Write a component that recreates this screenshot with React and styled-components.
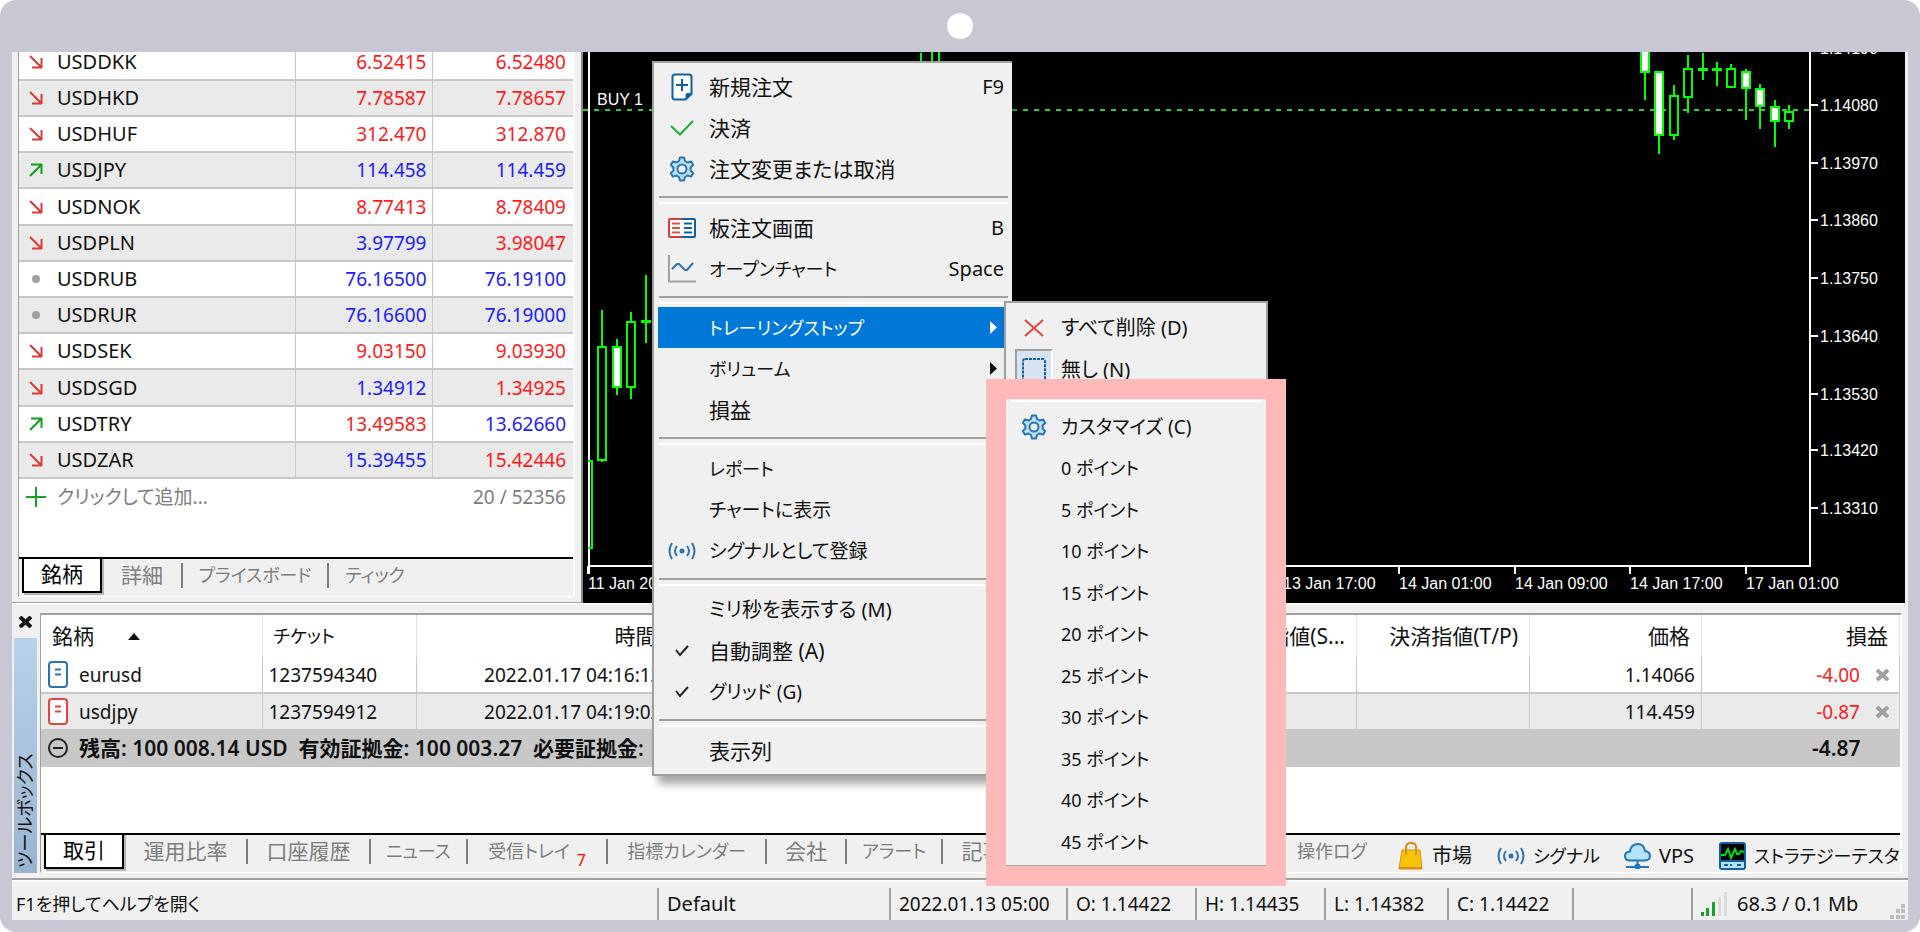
import React from 'react';
import styled, { createGlobalStyle, css } from 'styled-components';

const color = {
  frame: '#c8c7d4',
  panel: '#f0f0f0',
  line: '#a0a0a0',
  grid: '#c8c8c8',
  stripe: '#eaeaea',
  muted: '#7d7d7d',
  red: '#ff1a1a',
  blue: '#2020ff',
  candle: '#00ff00',
  highlight: '#0078d7',
  pink: '#ffb9b9',
};

const GlobalStyle = createGlobalStyle`
  * {
    box-sizing: border-box;
  }
  body {
    margin: 0;
    background: #fff;
    color: #111;
    font-family: 'Noto Sans', 'Noto Sans CJK JP', sans-serif;
    font-size: 20px;
    line-height: 24px;
    font-feature-settings: 'palt';
  }
  button {
    margin: 0;
    padding: 0;
    border: 0;
    background: none;
    color: inherit;
    font: inherit;
    font-feature-settings: inherit;
    white-space: nowrap;
    cursor: pointer;
  }
  ul {
    list-style: none;
    margin: 0;
    padding: 0;
  }
  svg {
    display: block;
    flex: none;
  }
`;

const Device = styled.div`
  position: relative;
  display: flex;
  flex-direction: column;
  min-height: 100vh;
  padding: 0 12px 12px;
  border-radius: 16px;
  background: ${color.frame};
  overflow: hidden;
`;

const Camera = styled.div`
  height: 52px;
  display: flex;
  align-items: center;
  justify-content: center;
  &::after {
    content: '';
    width: 26px;
    height: 26px;
    border-radius: 50%;
    background: #fff;
  }
`;

const Screen = styled.main`
  flex: 1;
  display: flex;
  flex-direction: column;
  min-width: 0;
  background: ${color.panel};
`;

const Upper = styled.section`
  display: flex;
  height: 552px;
  border-bottom: 1px solid #fff;
`;

/* ---------- market watch ---------- */

const MarketPanel = styled.div`
  width: 571px;
  flex: none;
  display: flex;
  flex-direction: column;
  padding: 0 6px 5px;
  border-right: 2px solid #8c8c8c;
  border-bottom: 1px solid ${color.line};
`;

const MarketBody = styled.div`
  flex: 1;
  display: flex;
  flex-direction: column;
  overflow: hidden;
  border-left: 1px solid ${color.line};
  border-right: 2px solid #fafafa;
  border-bottom: 1px solid #fff;
`;

const MarketList = styled.div`
  flex: 1;
  background: #fff;
  overflow: hidden;
`;

const MarketTable = styled.table`
  width: 100%;
  margin-top: -8px;
  border-collapse: collapse;
  table-layout: fixed;
  tr {
    height: 36px;
  }
  tr:nth-child(5n) {
    height: 37px;
  }
  tr:nth-child(even) {
    background: ${color.stripe};
  }
  td {
    padding: 0;
    border-bottom: 2px solid ${color.grid};
  }
  td + td {
    border-left: 1px solid ${color.grid};
  }
`;

const SymbolCell = styled.div`
  display: flex;
  align-items: center;
  gap: 11px;
  padding-left: 7px;
  svg {
    width: 20px;
  }
`;

const Price = styled.div`
  padding-right: ${(props) => (props.$last ? 7 : 5)}px;
  font-size: 19px;
  text-align: right;
  color: ${(props) => (props.$up ? color.blue : color.red)};
`;

const AddRow = styled.div`
  display: flex;
  align-items: center;
  justify-content: space-between;
  height: 36px;
  padding: 0 7px;
  font-size: 19px;
  color: ${color.muted};
  button {
    display: flex;
    align-items: center;
    gap: 11px;
  }
`;

/* ---------- tabs, both panels ---------- */

const TabBar = styled.div`
  display: flex;
  height: 39px;
  background: ${color.panel};
  border-top: 2px solid #000;
  overflow: hidden;
`;

const TabList = styled.nav`
  flex: none;
  display: flex;
  margin-right: 9px;
`;

const Tab = styled.button`
  position: relative;
  flex: none;
  width: ${(props) => props.$width}px;
  height: 32px;
  color: ${color.muted};
  font-size: ${(props) => (props.$kana ? 18 : 21)}px;
  &:not(:last-child)::after {
    content: '';
    position: absolute;
    right: -1px;
    top: 4px;
    width: 2px;
    height: 25px;
    background: ${color.muted};
  }
  ${(props) => props.$active && css`
    height: 36px;
    margin-top: -2px;
    margin-left: 3px;
    border: 2px solid #000;
    border-top: 0;
    background: #fff;
    color: #000;
    box-shadow: 2px 2px 0 #b4b4b4;
    &:not(:last-child)::after {
      display: none;
    }
  `}
  sub {
    margin-left: 7px;
    font-size: 16px;
    line-height: 0;
    vertical-align: -8px;
    color: #ff0000;
  }
`;

/* ---------- chart ---------- */

const ChartArea = styled.div`
  flex: 1;
  min-width: 0;
  height: 551px;
  margin-right: 3px;
  background: #000;
  overflow: hidden;
  svg {
    width: 100%;
    height: 551px;
  }
  text {
    fill: #fff;
    font-family: 'Liberation Sans', sans-serif;
    font-size: 16px;
  }
`;

/* ---------- toolbox ---------- */

const Toolbox = styled.section`
  flex: 1;
  display: flex;
  padding: 9px 6px 5px 0;
  border-bottom: 2px solid ${color.line};
`;

const Rail = styled.div`
  width: 28px;
  flex: none;
  display: flex;
  flex-direction: column;
  padding: 0 3px 0 2px;
  > button {
    height: 25px;
    display: flex;
    align-items: flex-start;
    justify-content: center;
    padding-top: 3px;
  }
`;

const RailTitle = styled.div`
  flex: 1;
  width: 23px;
  padding-top: 5px;
  writing-mode: vertical-rl;
  text-orientation: sideways;
  transform: rotate(180deg);
  font-size: 18px;
  line-height: 23px;
  background: linear-gradient(to top, #b9d1ea, #99b4d1);
`;

const ToolboxMain = styled.div`
  flex: 1;
  min-width: 0;
  display: flex;
  flex-direction: column;
  border-left: 1px solid ${color.line};
  border-top: 2px solid ${color.line};
  border-right: 2px solid #fff;
  border-bottom: 1px solid #fff;
`;

const TradeArea = styled.div`
  flex: 1;
  background: #fff;
`;

const TradeTable = styled.table`
  width: 100%;
  border-collapse: collapse;
  table-layout: fixed;
  font-size: 19px;
  th,
  td {
    padding: 0 6px;
    border-right: 1px solid ${color.grid};
    text-align: left;
    white-space: nowrap;
    overflow: hidden;
  }
  th {
    height: 42px;
    padding: 0 11px;
    border-color: #e5e5e5;
    font-weight: 400;
    font-size: 21px;
  }
  tbody tr {
    height: 36px;
  }
  tbody tr:first-child td {
    border-bottom: 2px solid ${color.grid};
  }
  tbody tr:nth-child(2) {
    background: ${color.stripe};
  }
  .num {
    text-align: right;
  }
  .kana {
    font-size: 18px;
  }
  tfoot tr {
    height: 38px;
    background: ${color.grid};
    font-weight: 600;
  }
  tfoot td {
    border: 0;
    font-size: 21px;
    white-space: pre;
    overflow: visible;
  }
  tfoot .num {
    padding-right: 39px;
  }
`;

const CellLine = styled.div`
  display: flex;
  align-items: center;
  justify-content: ${(props) => (props.$end ? 'flex-end' : 'flex-start')};
  gap: ${(props) => props.$gap || 11}px;
  padding: ${(props) => (props.$end ? '0 4px 0 0' : '0 0 0 1px')};
`;

const Loss = styled.span`
  color: ${color.red};
`;

const SortMark = styled.span`
  display: inline-block;
  margin-left: 34px;
  margin-bottom: 4px;
  border: 6px solid transparent;
  border-top: 0;
  border-bottom: 7px solid #111;
  vertical-align: middle;
`;

const ToolButton = styled.button`
  flex: none;
  display: flex;
  align-items: center;
  gap: 8px;
  height: 38px;
  margin-top: 2px;
  width: ${(props) => props.$width}px;
  font-size: ${(props) => (props.$kana ? 18 : 20)}px;
`;

/* ---------- status bar ---------- */

const StatusBar = styled.footer`
  display: flex;
  height: 40px;
  padding-top: 6px;
  border-top: 2px solid #fafafa;
`;

const StatusCell = styled.div`
  flex: ${(props) => (props.$width ? 'none' : '1')};
  width: ${(props) => props.$width}px;
  display: flex;
  align-items: center;
  gap: 10px;
  padding-left: ${(props) => (props.$first ? 4 : 8)}px;
  font-size: ${(props) => (props.$size || 19)}px;
  white-space: nowrap;
  border-left: ${(props) => (props.$first ? 0 : 2)}px solid ${color.line};
  &:last-child svg:last-child {
    margin: 14px 3px 0 auto;
  }
`;

/* ---------- context menus ---------- */

const Menu = styled.ul`
  position: absolute;
  left: 652px;
  top: 61px;
  width: 360px;
  padding: 3px 4px;
  background: ${color.panel};
  border: 1px solid ${color.line};
  border-width: 2px 0 2px 2px;
  box-shadow: 6px 8px 8px rgba(0, 0, 0, 0.35);
`;

const SubMenu = styled(Menu)`
  left: 1004px;
  top: 301px;
  width: 264px;
  padding-top: 4px;
  border-right-width: 2px;
`;

const MenuItem = styled.button`
  display: flex;
  align-items: center;
  width: 100%;
  height: 41px;
  padding: 0 4px 0 10px;
  text-align: left;
  font-size: ${(props) => props.$size || 18}px;
  ${(props) => props.$active && css`
    background: ${color.highlight};
    color: #fff;
  `}
  ${SubMenu} & {
    padding-left: 5px;
  }
  ${SubMenu} li:nth-child(odd) & {
    height: 42px;
  }
  kbd {
    margin-left: auto;
    font-family: inherit;
    font-size: 20px;
  }
  > svg {
    margin: 0 6px 0 auto;
  }
`;

const MenuIcon = styled.span`
  flex: none;
  display: flex;
  align-items: center;
  justify-content: center;
  width: 28px;
  margin-right: 13px;
  ${SubMenu} & {
    width: 38px;
    height: 100%;
    margin-right: 8px;
    ${(props) => props.$pressed && css`
      background: #d8e4f2;
      border: 2px solid ${color.line};
      border-right-color: #fff;
    `}
  }
`;

const Separator = styled.li`
  height: 18px;
  padding: 7px 0 0 1px;
  &::after {
    content: '';
    display: block;
    height: 4px;
    border-top: 2px solid ${color.line};
    border-bottom: 2px solid #fff;
  }
  ${SubMenu} & {
    height: 16px;
    padding-top: 4px;
  }
`;

const Marker = styled.div`
  position: absolute;
  left: 986px;
  top: 379px;
  width: 300px;
  height: 507px;
  border: 20px solid ${color.pink};
  pointer-events: none;
`;

/* ---------- icons ---------- */

const DownArrow = () => (
  <svg width="20" height="14" viewBox="0 0 20 14" fill="none" stroke="#d93a34" strokeWidth="2">
    <path d="M4 1l11 11M6 12.5h10M15.5 3v10" />
  </svg>
);

const UpArrow = () => (
  <svg width="20" height="14" viewBox="0 0 20 14" fill="none" stroke="#0fa01e" strokeWidth="2">
    <path d="M4 13L15 2M5 1.500h11M15.500 1v10" />
  </svg>
);

const Dot = () => (
  <svg width="20" height="8" viewBox="0 0 20 8">
    <circle cx="10" cy="4" r="4" fill="#a0a0a0" />
  </svg>
);

const Plus = () => (
  <svg width="20" height="20" viewBox="0 0 20 20" stroke="#17a323" strokeWidth="2">
    <path d="M0 10h20M10 0v20" />
  </svg>
);

const trends = { down: DownArrow, up: UpArrow, flat: Dot };

const NewOrderIcon = () => (
  <svg width="22" height="28" viewBox="0 0 22 28">
    <path d="M4 1.500h14q2.500 0 2.500 2.500v17l-6 5.500H4q-2.500 0-2.500-2.500V4q0-2.500 2.500-2.500z" fill="#fff" stroke="#1160a4" strokeWidth="2" />
    <path d="M20.500 20h-4q-2 0-2 2v5z" fill="#1160a4" />
    <path d="M5 12h12M11 6v12" stroke="#1160a4" strokeWidth="2" />
  </svg>
);

const GreenCheck = () => (
  <svg width="26" height="18" viewBox="0 0 26 18" fill="none" stroke="#22ae35" strokeWidth="2">
    <path d="M2 7l9 8.500L24 2" />
  </svg>
);

const GearIcon = () => (
  <svg width="26" height="26" viewBox="0 0 26 26" fill="#b9e0fd" stroke="#2a74b2" strokeWidth="2" strokeLinejoin="round">
    <path d="M11 1.500h4l1 3.500 2.500 1.500 3.700-1.100 2 3.500-2.600 2.600v3l2.600 2.600-2 3.500-3.700-1.100L16 21l-1 3.500h-4L10 21l-2.500-1.500-3.700 1.100-2-3.500 2.600-2.600v-3L1.800 8.900l2-3.500 3.700 1.100L10 5z" />
    <circle cx="13" cy="13" r="4.500" fill="#f0f0f0" />
  </svg>
);

const BookIcon = () => (
  <svg width="28" height="20" viewBox="0 0 28 20" fill="none" strokeWidth="2">
    <path d="M14 1H2q-1 0-1 1v16q0 1 1 1h12" stroke="#d93a34" fill="#fff" />
    <path d="M14 1h12q1 0 1 1v16q0 1-1 1H14" stroke="#1160a4" fill="#fff" />
    <path d="M4 5.500h8M4 10h8M4 14.500h8" stroke="#e2504a" />
    <path d="M16 5.500h8M16 10h8M16 14.500h8" stroke="#1160a4" />
  </svg>
);

const OpenChartIcon = () => (
  <svg width="28" height="28" viewBox="0 0 28 28" fill="none" strokeWidth="2">
    <path d="M1 0v26.500h27" stroke="#a0a0a0" />
    <path d="M4 14l5-5h2l6 6h2l6-7" stroke="#2a74b2" />
  </svg>
);

const SignalIcon = () => (
  <svg width="28" height="18" viewBox="0 0 28 18" fill="none" stroke="#2a74b2" strokeWidth="2">
    <path d="M4 1q-5 8 0 16M9 4q-4 5 0 10M19 4q4 5 0 10M24 1q5 8 0 16" />
    <circle cx="14" cy="9" r="2.500" fill="#2a74b2" stroke="none" />
  </svg>
);

const SmallCheck = () => (
  <svg width="16" height="12" viewBox="0 0 16 12" fill="none" stroke="#222" strokeWidth="2">
    <path d="M2 5l4 5L14 1" />
  </svg>
);

const DeleteIcon = () => (
  <svg width="20" height="18" viewBox="0 0 20 18" stroke="#e0453f" strokeWidth="2">
    <path d="M1 1l18 16M19 1L1 17" />
  </svg>
);

const NoneIcon = () => (
  <svg width="26" height="26" viewBox="0 0 26 26">
    <rect x="2" y="2" width="22" height="22" rx="2" fill="none" stroke="#1160a4" strokeWidth="2" strokeDasharray="3 1" />
  </svg>
);

const SubArrow = () => (
  <svg width="9" height="13" viewBox="0 0 9 13">
    <path d="M1 0l7 6.500L1 13z" fill="currentColor" />
  </svg>
);

const OrderIcon = ({ stroke }) => (
  <svg width="20" height="27" viewBox="0 0 20 27" fill="none" stroke={ stroke } strokeWidth="2">
    <rect x="1" y="1" width="18" height="25" rx="3" fill="#fff" />
    <path d="M7 8.500h6M7 13.500h6" />
  </svg>
);

const Cross = ({ stroke }) => (
  <svg width="13" height="12" viewBox="0 0 13 12" stroke={ stroke } strokeWidth="4">
    <path d="M1 1l11 10M12 1L1 11" />
  </svg>
);

const MinusCircle = () => (
  <svg width="20" height="20" viewBox="0 0 20 20" fill="none" stroke="#222" strokeWidth="2">
    <circle cx="10" cy="10" r="9" />
    <path d="M5 10h10" />
  </svg>
);

const BagIcon = () => (
  <svg width="26" height="28" viewBox="0 0 26 28">
    <path d="M8 12V5q0-4 5-4t5 4v7" fill="none" stroke="#d98c1a" strokeWidth="2" />
    <path d="M4 8h18l2 19H1z" fill="#f8c300" stroke="#d98c1a" strokeWidth="1" />
    <path d="M1 25h23v2H1z" fill="#d98c1a" />
    <path d="M8 8v5M18 8v5" stroke="#d98c1a" strokeWidth="2" />
  </svg>
);

const CloudIcon = () => (
  <svg width="27" height="26" viewBox="0 0 27 26" fill="none" stroke="#1f76b8" strokeWidth="2">
    <path d="M6 17.500q-5 0-5-4.500 0-4 5-4.500Q7 1 14 1q6 0 7 7 5 1 5 5t-5 4.500z" fill="#b5e2ff" />
    <path d="M13.500 18v4M2 24h23" />
    <circle cx="13.500" cy="23.500" r="2" fill="#1f76b8" />
  </svg>
);

const TesterIcon = () => (
  <svg width="27" height="28" viewBox="0 0 27 28" fill="none">
    <rect x="1" y="1" width="25" height="26" rx="2" fill="#000" stroke="#1160a4" strokeWidth="2" />
    <path d="M2 20h23v6H2z" fill="#b5e2ff" />
    <path d="M2 19h23" stroke="#1160a4" strokeWidth="2" />
    <path d="M2 13h4l3-6 3 9 4-9 2 5h2l2-3 3 1" stroke="#00e000" strokeWidth="2" />
    <path d="M5 23h4M11 23h2M18 23h4" stroke="#1160a4" strokeWidth="2" />
  </svg>
);

const BarsIcon = () => (
  <svg width="26" height="24" viewBox="0 0 26 24">
    <path d="M0 20h3v4H0zM5 16h3v8H5zM11 10h3v14h-3z" fill="#16a02c" />
    <path d="M17 5h3v19h-3zM23 0h3v24h-3z" fill="#dcdcdc" />
  </svg>
);

const Grip = () => (
  <svg width="15" height="15" viewBox="0 0 15 15" fill="#bdbdbd">
    <path d="M11 0h4v4h-4zM6 5h4v4H6zM11 5h4v4h-4zM0 11h4v4H0zM6 11h4v4H6zM11 11h4v4h-4z" />
  </svg>
);

/* ---------- data ---------- */

// symbol, trend, bid, bid is up, ask, ask is up
const quotes = [
  ['USDDKK', 'down', '6.52415', false, '6.52480', false],
  ['USDHKD', 'down', '7.78587', false, '7.78657', false],
  ['USDHUF', 'down', '312.470', false, '312.870', false],
  ['USDJPY', 'up', '114.458', true, '114.459', true],
  ['USDNOK', 'down', '8.77413', false, '8.78409', false],
  ['USDPLN', 'down', '3.97799', true, '3.98047', false],
  ['USDRUB', 'flat', '76.16500', true, '76.19100', true],
  ['USDRUR', 'flat', '76.16600', true, '76.19000', true],
  ['USDSEK', 'down', '9.03150', false, '9.03930', false],
  ['USDSGD', 'down', '1.34912', true, '1.34925', false],
  ['USDTRY', 'up', '13.49583', false, '13.62660', true],
  ['USDZAR', 'down', '15.39455', true, '15.42446', false],
];

const marketTabs = [
  { label: '銘柄', width: 80, active: true },
  { label: '詳細', width: 80 },
  { label: 'プライスボード', width: 146, kana: true },
  { label: 'ティック', width: 94, kana: true },
];

const toolboxTabs = [
  { label: '取引', width: 80, active: true },
  { label: '運用比率', width: 123 },
  { label: '口座履歴', width: 123 },
  { label: 'ニュース', width: 97, kana: true },
  { label: '受信トレイ', width: 140, kana: true, badge: 7 },
  { label: '指標カレンダー', width: 159, kana: true },
  { label: '会社', width: 80 },
  { label: 'アラート', width: 96, kana: true },
  { label: '記事', width: 81 },
  { label: 'ライブラリ', width: 114, kana: true },
  { label: 'エキスパート', width: 138, kana: true },
  { label: '操作ログ', width: 114, kana: true },
];

const menuItems = [
  { label: '新規注文', size: 21, icon: <NewOrderIcon />, hint: 'F9' },
  { label: '決済', size: 21, icon: <GreenCheck /> },
  { label: '注文変更または取消', size: 21, icon: <GearIcon /> },
  null,
  { label: '板注文画面', size: 21, icon: <BookIcon />, hint: 'B' },
  { label: 'オープンチャート', icon: <OpenChartIcon />, hint: 'Space' },
  null,
  { label: 'トレーリングストップ', active: true, sub: true },
  { label: 'ボリューム', sub: true },
  { label: '損益', size: 21 },
  null,
  { label: 'レポート' },
  { label: 'チャートに表示', size: 19 },
  { label: 'シグナルとして登録', size: 19, icon: <SignalIcon /> },
  null,
  { label: 'ミリ秒を表示する (M)', size: 20 },
  { label: '自動調整 (A)', size: 21, icon: <SmallCheck /> },
  { label: 'グリッド (G)', size: 19, icon: <SmallCheck /> },
  null,
  { label: '表示列', size: 21 },
];

const points = [0, 5, 10, 15, 20, 25, 30, 35, 40, 45];

const subItems = [
  { label: 'すべて削除 (D)', size: 20, icon: <DeleteIcon /> },
  { label: '無し (N)', size: 20, icon: <NoneIcon />, pressed: true },
  null,
  { label: 'カスタマイズ (C)', size: 19, icon: <GearIcon /> },
  ...points.map((point) => ({ label: `${point} ポイント` })),
];

// x, wick top, wick bottom, body top, body bottom, filled
const candles = [
  [602, 310, 462, 347, 460, false],
  [617, 339, 395, 347, 387, true],
  [631, 312, 399, 322, 387, false],
  [646, 275, 343, 321, 322, false],
  [1645, 40, 100, 40, 72, true],
  [1659, 71, 154, 72, 135, true],
  [1674, 85, 140, 96, 135, false],
  [1688, 55, 113, 69, 97, false],
  [1703, 53, 80, 69, 70, false],
  [1717, 62, 86, 69, 70, false],
  [1731, 64, 87, 69, 87, false],
  [1746, 69, 120, 72, 88, true],
  [1760, 84, 129, 89, 106, true],
  [1775, 100, 147, 107, 121, true],
  [1789, 105, 129, 112, 121, false],
];

const prices = [
  ['1.14190', 48],
  ['1.14080', 105],
  ['1.13970', 163],
  ['1.13860', 220],
  ['1.13750', 278],
  ['1.13640', 336],
  ['1.13530', 394],
  ['1.13420', 450],
  ['1.13310', 508],
];

const times = [
  ['11 Jan 2022', 588],
  ['13 Jan 17:00', 1283],
  ['14 Jan 01:00', 1399],
  ['14 Jan 09:00', 1515],
  ['14 Jan 17:00', 1630],
  ['17 Jan 01:00', 1746],
];

/* ---------- parts ---------- */

const Tabs = ({ tabs, children }) => (
  <TabBar>
    <TabList>
      { tabs.map((tab) => (
        <Tab key={ tab.label } $width={ tab.width } $kana={ tab.kana } $active={ tab.active }>
          { tab.label }
          { tab.badge && <sub>{ tab.badge }</sub> }
        </Tab>
      )) }
    </TabList>
    { children }
  </TabBar>
);

const MenuRows = ({ items }) => items.map((item, key) => (
  item ? (
    <li key={ key }>
      <MenuItem $size={ item.size } $active={ item.active }>
        <MenuIcon $pressed={ item.pressed }>{ item.icon }</MenuIcon>
        <span>{ item.label }</span>
        { item.hint && <kbd>{ item.hint }</kbd> }
        { item.sub && <SubArrow /> }
      </MenuItem>
    </li>
  ) : <Separator key={ key } />
));

const MarketWatch = () => (
  <MarketPanel>
    <MarketBody>
      <MarketList>
        <MarketTable>
          <colgroup>
            <col />
            <col width="137" />
            <col width="141" />
          </colgroup>
          <tbody>
            { quotes.map(([name, trend, bid, bidUp, ask, askUp]) => {
              const Trend = trends[trend];
              return (
                <tr key={ name }>
                  <td><SymbolCell><Trend />{ name }</SymbolCell></td>
                  <td><Price $up={ bidUp }>{ bid }</Price></td>
                  <td><Price $up={ askUp } $last>{ ask }</Price></td>
                </tr>
              );
            }) }
          </tbody>
        </MarketTable>
        <AddRow>
          <button><Plus />クリックして追加...</button>
          <span>20 / 52356</span>
        </AddRow>
      </MarketList>
      <Tabs tabs={ marketTabs } />
    </MarketBody>
  </MarketPanel>
);

const Chart = () => (
  <ChartArea>
    <svg viewBox="583 52 1322 551" preserveAspectRatio="xMinYMin meet" shapeRendering="crispEdges">
      <path d="M583 110H1809" stroke="#32cd32" strokeWidth="2" strokeDasharray="5 6" />
      <text x="597" y="105">BUY 1</text>
      <path d="M588.500 52V574M588 566H1810M1810 52V567" stroke="#fff" strokeWidth="2" />
      <path d="M588 461h4v87h-4M921 53v12M932 52v12M939 52v12" stroke={ color.candle } strokeWidth="2" fill="none" />
      { candles.map(([x, high, low, top, bottom, filled]) => (
        <g key={ x } stroke={ color.candle } strokeWidth="2">
          <path d={ `M${x} ${high}V${low}` } />
          <rect x={ x - 4 } y={ top } width="8" height={ bottom - top } fill={ filled ? '#fff' : '#000' } />
        </g>
      )) }
      { prices.map(([label, y]) => (
        <g key={ label }>
          <path d={ `M1810 ${y}h8` } stroke="#fff" strokeWidth="2" />
          <text x="1820" y={ y + 6 }>{ label }</text>
        </g>
      )) }
      { times.map(([label, x]) => (
        <g key={ label }>
          <path d={ `M${x} 566v8` } stroke="#fff" strokeWidth="2" />
          <text x={ x } y="589">{ label }</text>
        </g>
      )) }
    </svg>
  </ChartArea>
);

const Trade = () => (
  <TradeTable>
    <colgroup>
      <col width="221" />
      <col width="154" />
      <col width="252" />
      <col width="120" />
      <col width="110" />
      <col />
      <col width="207" />
      <col width="173" />
      <col width="172" />
      <col width="198" />
    </colgroup>
    <thead>
      <tr>
        <th>銘柄<SortMark /></th>
        <th className="kana">チケット</th>
        <th className="num">時間</th>
        <th className="kana">タイプ</th>
        <th className="num">数量</th>
        <th className="num">価格</th>
        <th className="num">決済逆指値(S...</th>
        <th className="num">決済指値(T/P)</th>
        <th className="num">価格</th>
        <th className="num">損益</th>
      </tr>
    </thead>
    <tbody>
      <tr>
        <td><CellLine><OrderIcon stroke="#2a74b2" />eurusd</CellLine></td>
        <td>1237594340</td>
        <td className="num">2022.01.17 04:16:12</td>
        <td />
        <td />
        <td />
        <td />
        <td />
        <td className="num">1.14066</td>
        <td>
          <CellLine $end $gap={ 16 }>
            <Loss>-4.00</Loss>
            <button aria-label="close eurusd"><Cross stroke="#a0a0a0" /></button>
          </CellLine>
        </td>
      </tr>
      <tr>
        <td><CellLine><OrderIcon stroke="#e0453f" />usdjpy</CellLine></td>
        <td>1237594912</td>
        <td className="num">2022.01.17 04:19:02</td>
        <td />
        <td />
        <td />
        <td />
        <td />
        <td className="num">114.459</td>
        <td>
          <CellLine $end $gap={ 16 }>
            <Loss>-0.87</Loss>
            <button aria-label="close usdjpy"><Cross stroke="#a0a0a0" /></button>
          </CellLine>
        </td>
      </tr>
    </tbody>
    <tfoot>
      <tr>
        <td colSpan="9">
          <CellLine>
            <MinusCircle />
            { '残高: 100 008.14 USD  有効証拠金: 100 003.27  必要証拠金:' }
          </CellLine>
        </td>
        <td className="num">-4.87</td>
      </tr>
    </tfoot>
  </TradeTable>
);

const App = () => {
  return (
    <>
      <GlobalStyle />
      <Device>
        <Camera />
        <Screen>
          <Upper>
            <MarketWatch />
            <Chart />
          </Upper>
          <Toolbox>
            <Rail>
              <button aria-label="close toolbox"><Cross stroke="#111" /></button>
              <RailTitle>ツールボックス</RailTitle>
            </Rail>
            <ToolboxMain>
              <TradeArea>
                <Trade />
              </TradeArea>
              <Tabs tabs={ toolboxTabs }>
                <ToolButton $width={ 99 }><BagIcon />市場</ToolButton>
                <ToolButton $width={ 127 } $kana><SignalIcon />シグナル</ToolButton>
                <ToolButton $width={ 95 }><CloudIcon />VPS</ToolButton>
                <ToolButton $width={ 200 } $kana><TesterIcon />ストラテジーテスター</ToolButton>
              </Tabs>
            </ToolboxMain>
          </Toolbox>
          <StatusBar>
            <StatusCell $first $size={ 18 }>F1を押してヘルプを開く</StatusCell>
            <StatusCell $width={ 232 } $size={ 20 }>Default</StatusCell>
            <StatusCell $width={ 177 }>2022.01.13 05:00</StatusCell>
            <StatusCell $width={ 129 }>O: 1.14422</StatusCell>
            <StatusCell $width={ 129 }>H: 1.14435</StatusCell>
            <StatusCell $width={ 123 }>L: 1.14382</StatusCell>
            <StatusCell $width={ 125 }>C: 1.14422</StatusCell>
            <StatusCell $width={ 119 } />
            <StatusCell $width={ 217 } $size={ 20 }>
              <BarsIcon />
              68.3 / 0.1 Mb
              <Grip />
            </StatusCell>
          </StatusBar>
        </Screen>
        <Menu>
          <MenuRows items={ menuItems } />
        </Menu>
        <SubMenu>
          <MenuRows items={ subItems } />
        </SubMenu>
        <Marker />
      </Device>
    </>
  );
};

export default App;
